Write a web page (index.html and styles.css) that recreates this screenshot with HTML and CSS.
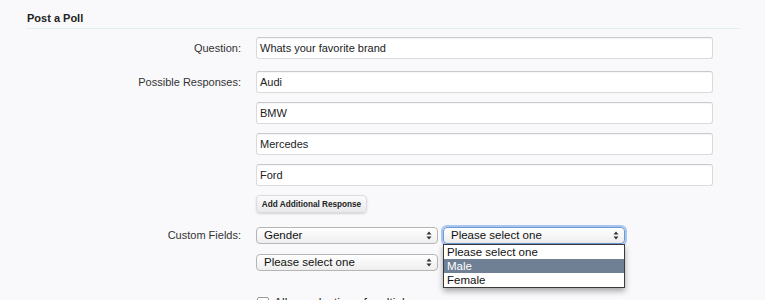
FILE: index.html
```html
<!DOCTYPE html>
<html>
<head>
<meta charset="utf-8">
<link rel="stylesheet" href="styles.css">
</head>
<body>
<div class="page">
  <h3 class="section-title">Post a Poll</h3>
  <div class="form">
    <div class="row row-question">
      <label class="label">Question:</label>
      <div class="controls">
        <div class="textbox">Whats your favorite brand</div>
      </div>
    </div>
    <div class="row row-responses">
      <label class="label">Possible Responses:</label>
      <div class="controls stack">
        <div class="textbox">Audi</div>
        <div class="textbox">BMW</div>
        <div class="textbox">Mercedes</div>
        <div class="textbox">Ford</div>
        <div class="button-line"><span class="button">Add Additional Response</span></div>
      </div>
    </div>
    <div class="row row-custom">
      <label class="label">Custom Fields:</label>
      <div class="controls stack-sm">
        <div class="select-line">
          <div class="select">Gender<svg class="arrows" viewBox="0 0 6 9" width="6" height="9"><path d="M3 0.5 L5.5 3.5 H0.5 Z M3 8.5 L5.5 5.5 H0.5 Z" fill="#333"/></svg></div>
          <div class="select-wrap">
            <div class="select focused">Please select one<svg class="arrows" viewBox="0 0 6 9" width="6" height="9"><path d="M3 0.5 L5.5 3.5 H0.5 Z M3 8.5 L5.5 5.5 H0.5 Z" fill="#333"/></svg></div>
            <ul class="dropdown">
              <li>Please select one</li>
              <li class="selected">Male</li>
              <li>Female</li>
            </ul>
          </div>
        </div>
        <div class="select-line">
          <div class="select">Please select one<svg class="arrows" viewBox="0 0 6 9" width="6" height="9"><path d="M3 0.5 L5.5 3.5 H0.5 Z M3 8.5 L5.5 5.5 H0.5 Z" fill="#333"/></svg></div>
        </div>
      </div>
    </div>
    <div class="row row-check">
      <span class="label"></span>
      <div class="controls">
        <label class="check"><span class="checkbox"></span>Allow selection of multiple responses</label>
      </div>
    </div>
  </div>
</div>
</body>
</html>
```
FILE: styles.css
```css
html, body {
  margin: 0;
  padding: 0;
  background: #f9f9fb;
  overflow: hidden;
}
body {
  font-family: "Liberation Sans", Arial, sans-serif;
  color: #222;
  width: 765px;
  height: 300px;
}
.page {
  padding: 0 25px 0 27px;
}
.section-title {
  margin: 0;
  padding: 12px 0 3px;
  font-size: 11px;
  font-weight: bold;
  line-height: 13px;
  color: #222;
  border-bottom: 1px solid #e3ecf1;
  width: 713px;
}
.form {
  display: flex;
  flex-direction: column;
}
.row {
  display: grid;
  grid-template-columns: 214px 457px;
  column-gap: 15px;
  align-items: start;
}
.row-question { margin-top: 8px; }
.row-responses { margin-top: 12px; }
.row-custom { margin-top: 14px; }
.row-check { margin-top: 25px; }
.label {
  text-align: right;
  font-size: 11px;
  color: #333;
  line-height: 22px;
}
.row-custom .label { line-height: 17px; }
.controls { display: flex; flex-direction: column; }
.stack { gap: 9px; }
.stack-sm { gap: 10px; }
.textbox {
  box-sizing: border-box;
  height: 22px;
  line-height: 20px;
  padding: 0 3px;
  font-size: 11px;
  color: #222;
  background: #fff;
  border: 1px solid #dadada;
  border-top-color: #c9c9c9;
  border-radius: 3px;
  box-shadow: inset 0 1px 1px rgba(0,0,0,0.04);
}
.button-line { display: flex; }
.button {
  display: block;
  box-sizing: border-box;
  height: 18px;
  width: 111px;
  line-height: 17px;
  text-align: center;
  font-size: 8.2px;
  font-weight: bold;
  color: #222;
  background: linear-gradient(#fbfbfb, #e9e9ed);
  border: 1px solid #dcdce0;
  border-radius: 4px;
  box-shadow: 0 1px 2px rgba(0,0,0,0.15);
}
.select-line {
  display: flex;
  gap: 5px;
}
.select-wrap { position: relative; }
.select {
  position: relative;
  box-sizing: border-box;
  width: 182px;
  height: 17px;
  line-height: 15px;
  padding: 0 0 0 7px;
  font-size: 11.5px;
  color: #111;
  background: linear-gradient(#ffffff, #eeeeee);
  border: 1px solid #b5b5b5;
  border-radius: 4px;
}
.select .arrows {
  position: absolute;
  right: 5px;
  top: 3px;
}
.select.focused {
  border-color: #6d9ad6;
  box-shadow: 0 0 0 2px #a9c6ec;
}
.dropdown {
  position: absolute;
  left: 0;
  top: 17px;
  width: 182px;
  box-sizing: border-box;
  margin: 0;
  padding: 0;
  list-style: none;
  background: #fff;
  border: 1px solid #3a3a3a;
  box-shadow: 0 3px 6px rgba(0,0,0,0.35);
  z-index: 2;
}
.dropdown li {
  height: 14px;
  line-height: 14px;
  padding: 0 3px;
  font-size: 11.5px;
  color: #111;
}
.dropdown li.selected {
  background: #6f7f94;
  color: #fff;
}
.check {
  display: flex;
  align-items: center;
  gap: 5px;
  font-size: 12px;
  color: #222;
  line-height: 14px;
  padding-left: 1px;
}
.checkbox {
  width: 10px;
  height: 10px;
  border: 1px solid #999;
  border-radius: 2px;
  background: #fff;
}
```
